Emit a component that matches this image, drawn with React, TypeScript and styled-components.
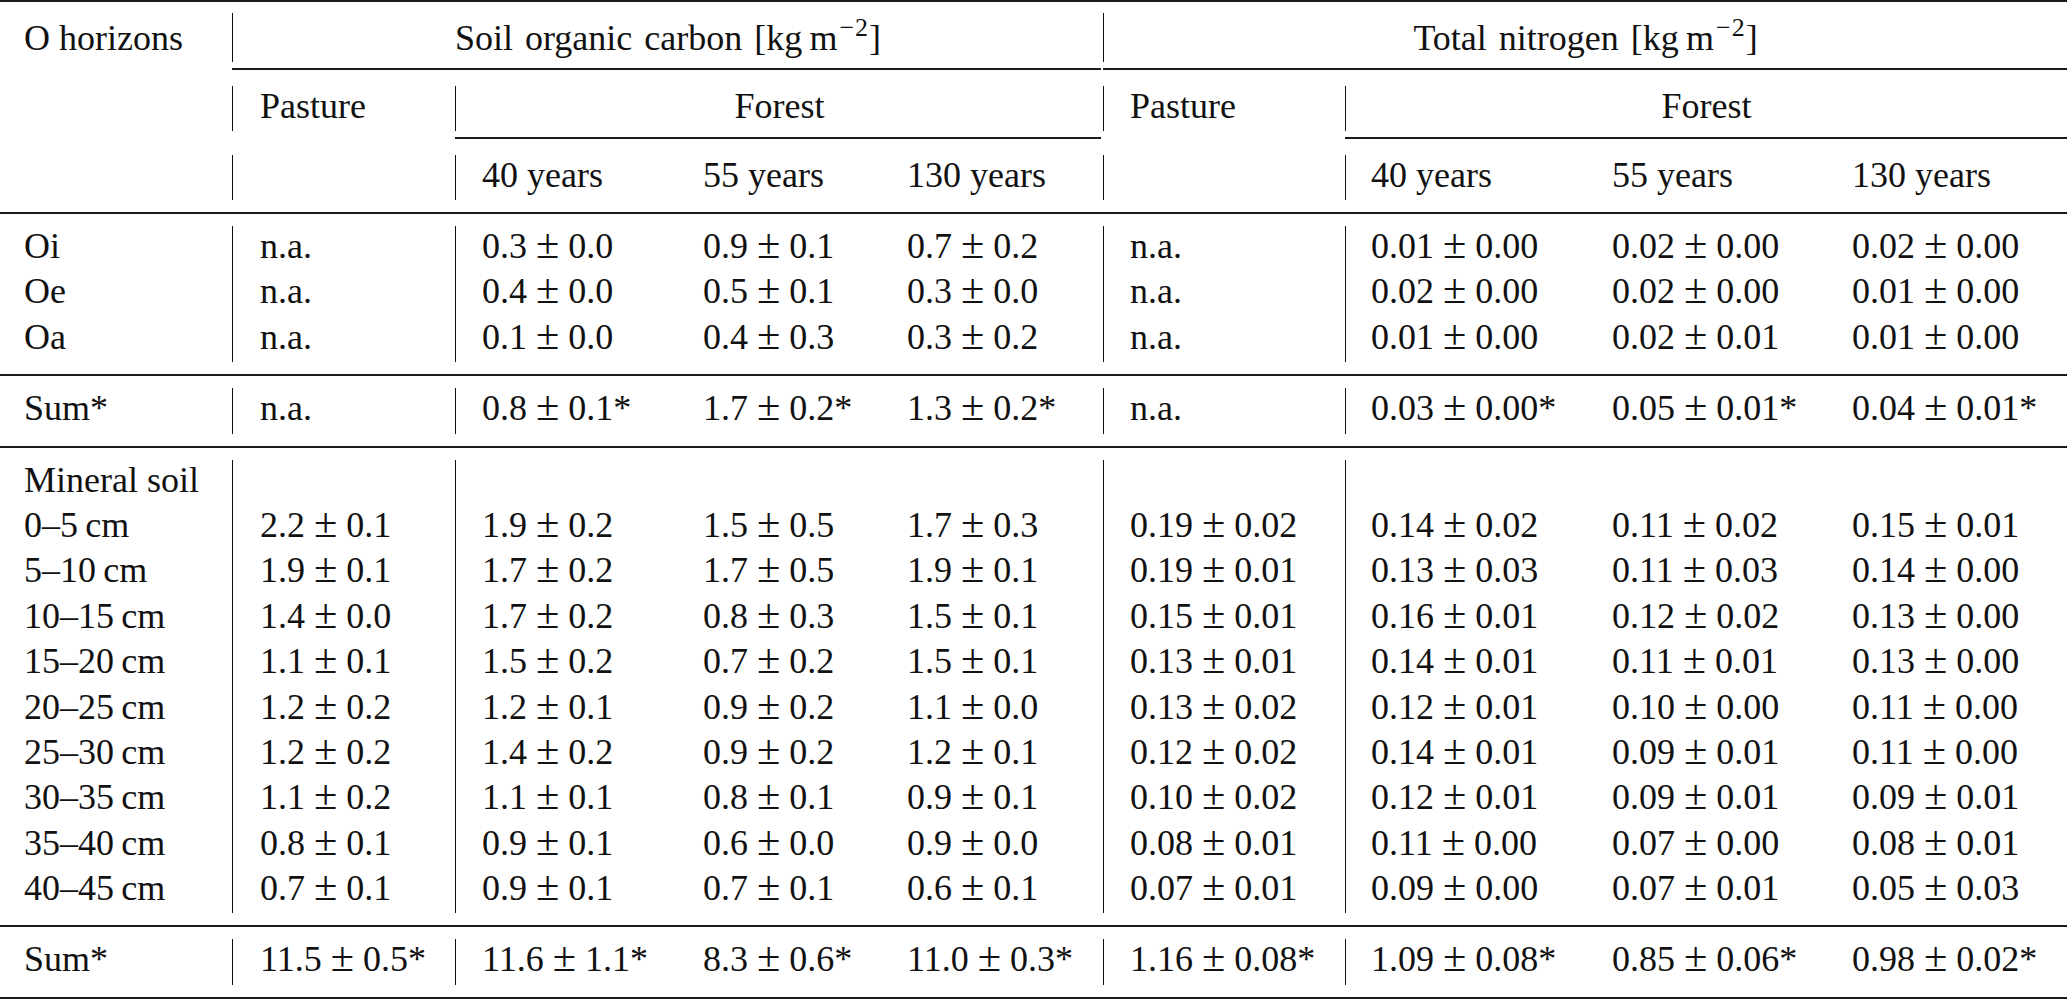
import * as React from 'react';
import styled, { createGlobalStyle } from 'styled-components';

const COLS = '232px 223px 248px 204px 196px 242px 266px 241px 1fr';
// left padding of the text in each column, and which columns open with a bar
const PAD = [24, 27, 26, 0, 0, 26, 25, 1, 0];
const BAR = [false, true, true, false, false, true, true, false, false];

const GlobalStyle = createGlobalStyle`
  html, body {
    margin: 0;
    padding: 0;
    overflow: hidden;
    background: #fff;
  }
`;

const Page = styled.div`
  width: 2067px;
  font-family: 'Liberation Serif', 'Times New Roman', serif;
  font-size: 36px;
  color: #111;
`;

const Rule = styled.div<{ $above: number; $below: number }>`
  height: 2px;
  background: #1c1c1c;
  margin: ${(p) => p.$above}px 0 ${(p) => p.$below}px;
`;

const Band = styled.div<{ $row: number }>`
  display: grid;
  grid-template-columns: ${COLS};
  grid-auto-rows: ${(p) => p.$row}px;
`;

const CmidBand = styled.div`
  display: grid;
  grid-template-columns: ${COLS};
  height: 2px;
  margin: 6px 0 16px;
`;

const CmidRule = styled.div<{ $from: number; $to: number; $trim?: boolean }>`
  grid-column: ${(p) => p.$from} / ${(p) => p.$to};
  grid-row: 1;
  height: 2px;
  background: #1c1c1c;
  margin-right: ${(p) => (p.$trim ? 2 : 0)}px;
`;

const Cell = styled.div<{
  $pad: number;
  $bar?: boolean;
  $span?: number;
  $center?: boolean;
  $top?: number;
}>`
  grid-column: span ${(p) => p.$span || 1};
  box-sizing: border-box;
  padding-left: ${(p) => p.$pad}px;
  padding-top: ${(p) => p.$top || 0}px;
  border-left: ${(p) => (p.$bar ? '1px solid #111' : '0')};
  text-align: ${(p) => (p.$center ? 'center' : 'left')};
  line-height: 40px;
  white-space: nowrap;
`;

const Title = styled.span`
  word-spacing: 3px;
`;

const PlusMinus = styled.span`
  font-size: 1.18em;
  line-height: 0;
  margin: 0 9px;
`;

const Sup = styled.sup`
  font-size: 0.72em;
  line-height: 0;
  vertical-align: 14px;
  margin-left: 2px;
  letter-spacing: 1px;
`;

const Unit = () => (
  <>
    [kg{'\u2009'}m<Sup>{'\u2212'}2</Sup>]
  </>
);

const Value = ({ text }: { text: string }) => {
  if (!text.includes(' ± ')) return <>{text}</>;
  const [a, b] = text.split(' ± ');
  return (
    <>
      {a}
      <PlusMinus>±</PlusMinus>
      {b}
    </>
  );
};

const oRows: string[][] = [
  ['Oi', 'n.a.', '0.3 ± 0.0', '0.9 ± 0.1', '0.7 ± 0.2', 'n.a.', '0.01 ± 0.00', '0.02 ± 0.00', '0.02 ± 0.00'],
  ['Oe', 'n.a.', '0.4 ± 0.0', '0.5 ± 0.1', '0.3 ± 0.0', 'n.a.', '0.02 ± 0.00', '0.02 ± 0.00', '0.01 ± 0.00'],
  ['Oa', 'n.a.', '0.1 ± 0.0', '0.4 ± 0.3', '0.3 ± 0.2', 'n.a.', '0.01 ± 0.00', '0.02 ± 0.01', '0.01 ± 0.00'],
];

const oSum = ['Sum*', 'n.a.', '0.8 ± 0.1*', '1.7 ± 0.2*', '1.3 ± 0.2*', 'n.a.', '0.03 ± 0.00*', '0.05 ± 0.01*', '0.04 ± 0.01*'];

const mineralRows: string[][] = [
  ['Mineral soil', '', '', '', '', '', '', '', ''],
  ['0–5\u2009cm', '2.2 ± 0.1', '1.9 ± 0.2', '1.5 ± 0.5', '1.7 ± 0.3', '0.19 ± 0.02', '0.14 ± 0.02', '0.11 ± 0.02', '0.15 ± 0.01'],
  ['5–10\u2009cm', '1.9 ± 0.1', '1.7 ± 0.2', '1.7 ± 0.5', '1.9 ± 0.1', '0.19 ± 0.01', '0.13 ± 0.03', '0.11 ± 0.03', '0.14 ± 0.00'],
  ['10–15\u2009cm', '1.4 ± 0.0', '1.7 ± 0.2', '0.8 ± 0.3', '1.5 ± 0.1', '0.15 ± 0.01', '0.16 ± 0.01', '0.12 ± 0.02', '0.13 ± 0.00'],
  ['15–20\u2009cm', '1.1 ± 0.1', '1.5 ± 0.2', '0.7 ± 0.2', '1.5 ± 0.1', '0.13 ± 0.01', '0.14 ± 0.01', '0.11 ± 0.01', '0.13 ± 0.00'],
  ['20–25\u2009cm', '1.2 ± 0.2', '1.2 ± 0.1', '0.9 ± 0.2', '1.1 ± 0.0', '0.13 ± 0.02', '0.12 ± 0.01', '0.10 ± 0.00', '0.11 ± 0.00'],
  ['25–30\u2009cm', '1.2 ± 0.2', '1.4 ± 0.2', '0.9 ± 0.2', '1.2 ± 0.1', '0.12 ± 0.02', '0.14 ± 0.01', '0.09 ± 0.01', '0.11 ± 0.00'],
  ['30–35\u2009cm', '1.1 ± 0.2', '1.1 ± 0.1', '0.8 ± 0.1', '0.9 ± 0.1', '0.10 ± 0.02', '0.12 ± 0.01', '0.09 ± 0.01', '0.09 ± 0.01'],
  ['35–40\u2009cm', '0.8 ± 0.1', '0.9 ± 0.1', '0.6 ± 0.0', '0.9 ± 0.0', '0.08 ± 0.01', '0.11 ± 0.00', '0.07 ± 0.00', '0.08 ± 0.01'],
  ['40–45\u2009cm', '0.7 ± 0.1', '0.9 ± 0.1', '0.7 ± 0.1', '0.6 ± 0.1', '0.07 ± 0.01', '0.09 ± 0.00', '0.07 ± 0.01', '0.05 ± 0.03'],
];

const mineralSum = ['Sum*', '11.5 ± 0.5*', '11.6 ± 1.1*', '8.3 ± 0.6*', '11.0 ± 0.3*', '1.16 ± 0.08*', '1.09 ± 0.08*', '0.85 ± 0.06*', '0.98 ± 0.02*'];

const DataRow = ({ cells }: { cells: string[] }) => (
  <>
    {cells.map((c, i) => (
      <Cell key={i} $pad={PAD[i]} $bar={BAR[i]}>
        <Value text={c} />
      </Cell>
    ))}
  </>
);

const BODY_ROW = 45.4;

export default function App() {
  return (
    <Page>
      <GlobalStyle />
      <Rule $above={0} $below={11} />

      <Band $row={49}>
        <Cell $pad={PAD[0]} $top={5}>
          O horizons
        </Cell>
        <Cell $pad={0} $bar $span={4} $center $top={5}>
          <Title>
            Soil organic carbon <Unit />
          </Title>
        </Cell>
        <Cell $pad={0} $bar $span={4} $center $top={5}>
          <Title>
            Total nitrogen <Unit />
          </Title>
        </Cell>
      </Band>

      <CmidBand>
        <CmidRule $from={2} $to={6} $trim />
        <CmidRule $from={6} $to={10} />
      </CmidBand>

      <Band $row={45}>
        <Cell $pad={PAD[0]} />
        <Cell $pad={PAD[1]} $bar>
          Pasture
        </Cell>
        <Cell $pad={0} $bar $span={3} $center>
          Forest
        </Cell>
        <Cell $pad={PAD[5]} $bar>
          Pasture
        </Cell>
        <Cell $pad={0} $bar $span={3} $center>
          Forest
        </Cell>
      </Band>

      <CmidBand>
        <CmidRule $from={3} $to={6} $trim />
        <CmidRule $from={7} $to={10} />
      </CmidBand>

      <Band $row={45}>
        <DataRow cells={['', '', '40 years', '55 years', '130 years', '', '40 years', '55 years', '130 years']} />
      </Band>

      <Rule $above={12} $below={12} />
      <Band $row={BODY_ROW}>
        {oRows.map((r) => (
          <DataRow key={r[0]} cells={r} />
        ))}
      </Band>

      <Rule $above={12} $below={12} />
      <Band $row={BODY_ROW}>
        <DataRow cells={oSum} />
      </Band>

      <Rule $above={12} $below={12} />
      <Band $row={BODY_ROW}>
        {mineralRows.map((r) => (
          <DataRow key={r[0]} cells={r} />
        ))}
      </Band>

      <Rule $above={12} $below={12} />
      <Band $row={BODY_ROW}>
        <DataRow cells={mineralSum} />
      </Band>
      <Rule $above={12} $below={0} />
    </Page>
  );
}
